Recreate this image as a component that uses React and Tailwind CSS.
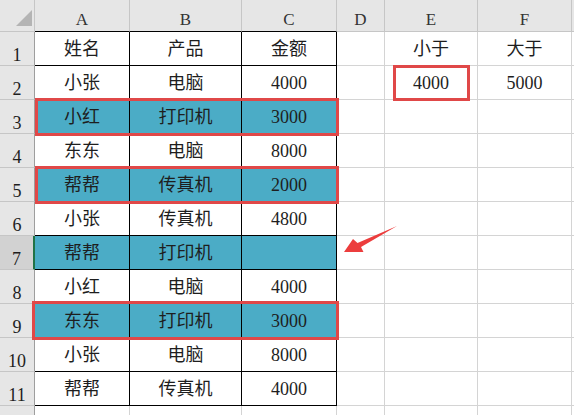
import React from "react";

const rows = [
  { n: 1, a: "姓名", b: "产品", c: "金额", e: "小于", f: "大于" },
  { n: 2, a: "小张", b: "电脑", c: "4000", e: "4000", f: "5000", eBox: true },
  { n: 3, a: "小红", b: "打印机", c: "3000", hl: true, box: "row" },
  { n: 4, a: "东东", b: "电脑", c: "8000" },
  { n: 5, a: "帮帮", b: "传真机", c: "2000", hl: true, box: "row" },
  { n: 6, a: "小张", b: "传真机", c: "4800" },
  { n: 7, a: "帮帮", b: "打印机", c: "", hl: true, selected: true },
  { n: 8, a: "小红", b: "电脑", c: "4000" },
  { n: 9, a: "东东", b: "打印机", c: "3000", hl: true, box: "wide" },
  { n: 10, a: "小张", b: "电脑", c: "8000" },
  { n: 11, a: "帮帮", b: "传真机", c: "4000", last: true },
];

const ColHeader = ({ label, w, dark }) => (
  <div
    className={`${w} h-full flex items-end justify-center pb-[3px] border-r border-[#c6c6c6] border-b ${
      dark ? "border-b-black" : "border-b-[#c6c6c6]"
    }`}
  >
    {label}
  </div>
);

const Row = ({ r }) => {
  const fill = r.hl ? "bg-[#4bacc6]" : "bg-white";
  const bottom = "border-b border-b-black";
  return (
    <div className="flex h-[34px] shrink-0">
      <div
        className={`w-[35px] shrink-0 flex items-end justify-center pb-[1px] border-b border-[#c6c6c6] border-r ${
          r.selected
            ? "bg-[#d2d2d2] border-r-[#217346] border-r-2"
            : "bg-[#e6e6e6] border-r-[#9e9e9e]"
        }`}
      >
        {r.n}
      </div>
      <div className={`relative flex ${fill}`}>
        <div className={`w-[95px] flex items-center justify-center border-r border-r-black ${bottom}`}>
          {r.a}
        </div>
        <div className={`w-[112px] flex items-center justify-center border-r border-r-black ${bottom}`}>
          {r.b}
        </div>
        <div className={`w-[95px] flex items-center justify-center border-r border-r-black ${bottom}`}>
          {r.c}
        </div>
        {r.box === "row" && (
          <div className="absolute z-10 top-[-2px] bottom-[-2px] left-0 right-[-2px] border-[3px] border-[#e04848]" />
        )}
        {r.box === "wide" && (
          <div className="absolute z-10 top-[-3px] bottom-[-2px] left-[-3px] right-[-2px] border-[3px] border-[#e04848]" />
        )}
      </div>
      <div className="w-[48px] border-r border-b border-[#d4d4d4]" />
      <div className="relative w-[93px] flex items-center justify-center border-r border-b border-[#d4d4d4]">
        {r.e}
        {r.eBox && (
          <div className="absolute z-10 top-[-1px] bottom-[-2px] left-[8px] right-[7px] border-[3px] border-[#e04848]" />
        )}
      </div>
      <div className="w-[94px] flex items-center justify-center border-r border-b border-[#d4d4d4]">
        {r.f}
      </div>
      <div className="flex-1 border-b border-[#d4d4d4]" />
    </div>
  );
};

export default function App() {
  return (
    <div className="relative w-[574px] h-[415px] overflow-hidden bg-white flex flex-col text-[18px] leading-none text-[#1e1e1e] font-['Liberation_Serif','Noto_Sans_CJK_SC',serif]">
      <div className="flex h-[32px] shrink-0 bg-[#e6e6e6] text-[17px] text-[#333]">
        <div className="w-[35px] h-full relative border-r border-b border-[#c6c6c6]">
          <svg className="absolute left-[16px] top-[10px]" width="16" height="16" viewBox="0 0 16 16">
            <polygon points="0,16 16,0 16,16" fill="#b4b4b4" />
          </svg>
        </div>
        <ColHeader label="A" w="w-[95px]" dark />
        <ColHeader label="B" w="w-[112px]" dark />
        <ColHeader label="C" w="w-[95px]" dark />
        <ColHeader label="D" w="w-[48px]" />
        <ColHeader label="E" w="w-[93px]" />
        <ColHeader label="F" w="w-[94px]" />
        <div className="flex-1 border-b border-[#c6c6c6]" />
      </div>
      {rows.map((r) => (
        <Row key={r.n} r={r} />
      ))}
      <div className="flex h-[34px] shrink-0">
        <div className="w-[35px] shrink-0 bg-[#e6e6e6] border-r border-[#9e9e9e]" />
        <div className="w-[95px] border-r border-[#d4d4d4]" />
        <div className="w-[112px] border-r border-[#d4d4d4]" />
        <div className="w-[95px] border-r border-[#d4d4d4]" />
        <div className="w-[48px] border-r border-[#d4d4d4]" />
        <div className="w-[93px] border-r border-[#d4d4d4]" />
        <div className="w-[94px] border-r border-[#d4d4d4]" />
      </div>
      <svg
        className="absolute left-[340px] top-[222px]"
        width="62"
        height="36"
        viewBox="340 222 62 36"
      >
        <polygon
          points="344,252 353,239 357.5,243 397,226 361,247 363.5,252"
          fill="#ec3d3d"
        />
      </svg>
    </div>
  );
}
